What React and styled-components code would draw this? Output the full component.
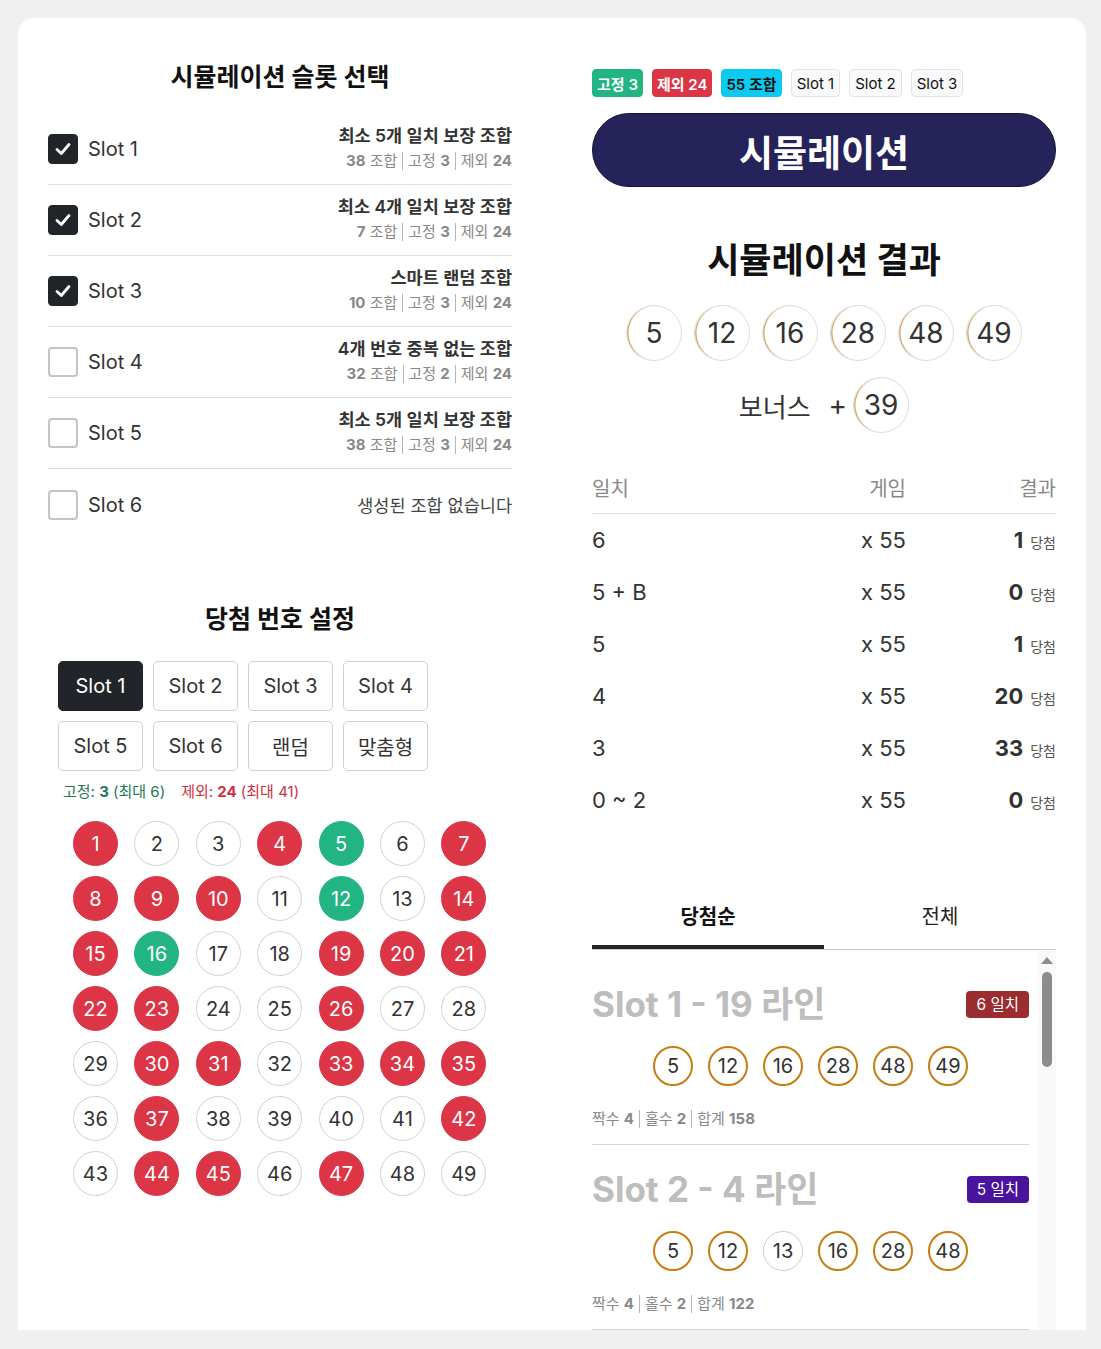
import React, { useState } from 'react';
import styled, { createGlobalStyle } from 'styled-components';

const GlobalStyle = createGlobalStyle`
  * { box-sizing: border-box; }
  body {
    margin: 0;
    padding: 18px 15px 0 18px;
    background: #f0f0f0;
    font-family: Inter, "Noto Sans CJK KR", sans-serif;
    color: #333;
  }
`;

const slots = [
  { name: 'Slot 1', checked: true, title: '최소 5개 일치 보장 조합', combos: 38, fixed: 3, excl: 24 },
  { name: 'Slot 2', checked: true, title: '최소 4개 일치 보장 조합', combos: 7, fixed: 3, excl: 24 },
  { name: 'Slot 3', checked: true, title: '스마트 랜덤 조합', combos: 10, fixed: 3, excl: 24 },
  { name: 'Slot 4', checked: false, title: '4개 번호 중복 없는 조합', combos: 32, fixed: 2, excl: 24 },
  { name: 'Slot 5', checked: false, title: '최소 5개 일치 보장 조합', combos: 38, fixed: 3, excl: 24 },
  { name: 'Slot 6', checked: false, empty: true },
];

const pickButtons = ['Slot 1', 'Slot 2', 'Slot 3', 'Slot 4', 'Slot 5', 'Slot 6', '랜덤', '맞춤형'];

const excluded = [1, 4, 7, 8, 9, 10, 14, 15, 19, 20, 21, 22, 23, 26, 30, 31, 33, 34, 35, 37, 42, 44, 45, 47];
const fixedNums = [5, 12, 16];

const winning = [5, 12, 16, 28, 48, 49];

const resultRows = [
  { match: '6', games: 55, wins: 1 },
  { match: '5 + B', games: 55, wins: 0 },
  { match: '5', games: 55, wins: 1 },
  { match: '4', games: 55, wins: 20 },
  { match: '3', games: 55, wins: 33 },
  { match: '0 ~ 2', games: 55, wins: 0 },
];

const lines = [
  { title: 'Slot 1 - 19 라인', match: 6, nums: [5, 12, 16, 28, 48, 49], even: 4, odd: 2, sum: 158 },
  { title: 'Slot 2 - 4 라인', match: 5, nums: [5, 12, 13, 16, 28, 48], even: 4, odd: 2, sum: 122 },
  { title: 'Slot 3 - 2 라인', match: 5, nums: [5, 12, 16, 28, 41, 49], even: 3, odd: 3, sum: 151 },
  { title: 'Slot 1 - 7 라인', match: 4, nums: [2, 5, 12, 16, 28, 33], even: 4, odd: 2, sum: 96 },
];

const matchColor = { 6: '#9b2c2f', 5: '#4a139e', 4: '#1f6fb2' };

export default function App() {
  const [activePick, setActivePick] = useState('Slot 1');
  const [tab, setTab] = useState('win');

  return (
    <>
      <GlobalStyle />
      <Card>
        <Column>
          <SectionTitle>시뮬레이션 슬롯 선택</SectionTitle>
          <SlotList>
            {slots.map((s) => (
              <SlotRow key={s.name}>
                <SlotLabel>
                  <CheckBox checked={s.checked}>
                    {s.checked && (
                      <svg width="20" height="20" viewBox="0 0 20 20">
                        <polyline points="4,10.5 8.3,14.5 16,5.5" fill="none" stroke="#fff" strokeWidth="2.8" strokeLinecap="round" strokeLinejoin="round" />
                      </svg>
                    )}
                  </CheckBox>
                  {s.name}
                </SlotLabel>
                {s.empty ? (
                  <EmptyText>생성된 조합 없습니다</EmptyText>
                ) : (
                  <SlotInfo>
                    <SlotInfoTitle>{s.title}</SlotInfoTitle>
                    <Stats>
                      <b>{s.combos}</b> 조합<Sep />고정 <b>{s.fixed}</b><Sep />제외 <b>{s.excl}</b>
                    </Stats>
                  </SlotInfo>
                )}
              </SlotRow>
            ))}
          </SlotList>

          <SectionTitle second>당첨 번호 설정</SectionTitle>
          <PickGrid>
            {pickButtons.map((b) => (
              <PickButton key={b} active={activePick === b} onClick={() => setActivePick(b)}>
                {b}
              </PickButton>
            ))}
          </PickGrid>
          <PickInfo>
            <Fixed>고정: <b>3</b> (최대 6)</Fixed>
            <Excluded>제외: <b>24</b> (최대 41)</Excluded>
          </PickInfo>
          <NumberGrid>
            {Array.from({ length: 49 }, (_, i) => i + 1).map((n) => (
              <NumberCell
                key={n}
                kind={fixedNums.includes(n) ? 'fixed' : excluded.includes(n) ? 'excl' : 'none'}
              >
                {n}
              </NumberCell>
            ))}
          </NumberGrid>
        </Column>

        <Column>
          <BadgeRow>
            <Badge variant="green">고정 3</Badge>
            <Badge variant="red">제외 24</Badge>
            <Badge variant="cyan">55 조합</Badge>
            <Badge variant="light">Slot 1</Badge>
            <Badge variant="light">Slot 2</Badge>
            <Badge variant="light">Slot 3</Badge>
          </BadgeRow>
          <SimButton>시뮬레이션</SimButton>

          <ResultTitle>시뮬레이션 결과</ResultTitle>
          <BallRow>
            {winning.map((n) => (
              <Ball key={n}>{n}</Ball>
            ))}
          </BallRow>
          <BonusRow>
            <BonusLabel>보너스</BonusLabel>
            <Plus>+</Plus>
            <Ball>39</Ball>
          </BonusRow>

          <ResultTable>
            <HeadCell>일치</HeadCell>
            <HeadCell align="right">게임</HeadCell>
            <HeadCell align="right">결과</HeadCell>
            {resultRows.map((r) => (
              <React.Fragment key={r.match}>
                <Cell>{r.match}</Cell>
                <Cell align="right">x {r.games}</Cell>
                <Cell align="right">
                  <b>{r.wins}</b>
                  <WinUnit>당첨</WinUnit>
                </Cell>
              </React.Fragment>
            ))}
          </ResultTable>

          <Tabs>
            <Tab active={tab === 'win'} onClick={() => setTab('win')}>당첨순</Tab>
            <Tab active={tab === 'all'} onClick={() => setTab('all')}>전체</Tab>
          </Tabs>
          <ListWrap>
            <LineList>
              {lines.map((l) => (
                <LineItem key={l.title}>
                  <LineHead>
                    <LineTitle>{l.title}</LineTitle>
                    <MatchBadge color={matchColor[l.match]}>{l.match} 일치</MatchBadge>
                  </LineHead>
                  <LineBalls>
                    {l.nums.map((n) => (
                      <SmallBall key={n} hit={winning.includes(n)}>{n}</SmallBall>
                    ))}
                  </LineBalls>
                  <Stats left>
                    짝수 <b>{l.even}</b><Sep />홀수 <b>{l.odd}</b><Sep />합계 <b>{l.sum}</b>
                  </Stats>
                </LineItem>
              ))}
            </LineList>
            <ScrollTrack>
              <ScrollArrow />
              <ScrollThumb />
            </ScrollTrack>
          </ListWrap>
        </Column>
      </Card>
    </>
  );
}

const Card = styled.div`
  width: 1068px;
  height: 1312px;
  background: #fff;
  border-radius: 16px 16px 0 0;
  padding: 30px;
  display: grid;
  grid-template-columns: 464px 464px;
  column-gap: 80px;
  overflow: hidden;
`;

const Column = styled.div`
  display: flex;
  flex-direction: column;
  min-width: 0;
`;

const SectionTitle = styled.h2`
  margin: ${({ second }) => (second ? '62px 0 0' : '12px 0 0')};
  font-size: 25px;
  line-height: 34px;
  font-weight: 700;
  color: #111;
  text-align: center;
`;

const SlotList = styled.div`
  margin-top: 20px;
`;

const SlotRow = styled.div`
  height: 71px;
  display: flex;
  align-items: center;
  justify-content: space-between;
  border-bottom: 1px solid #dedede;
  &:last-child { border-bottom: none; }
`;

const SlotLabel = styled.div`
  display: flex;
  align-items: center;
  gap: 10px;
  font-size: 20px;
  color: #333;
`;

const CheckBox = styled.span`
  width: 30px;
  height: 30px;
  border-radius: 4px;
  display: flex;
  align-items: center;
  justify-content: center;
  background: ${({ checked }) => (checked ? '#212529' : '#fff')};
  border: ${({ checked }) => (checked ? '1px solid #212529' : '2px solid #c4c4c4')};
`;

const SlotInfo = styled.div`
  text-align: right;
  margin-top: -4px;
`;

const SlotInfoTitle = styled.div`
  font-size: 17.5px;
  line-height: 23px;
  font-weight: 600;
  color: #333;
`;

const Stats = styled.div`
  margin-top: ${({ left }) => (left ? '23px' : '4px')};
  font-size: 15px;
  line-height: 20px;
  color: #8a8a8a;
  text-align: ${({ left }) => (left ? 'left' : 'right')};
  b { font-weight: 700; color: #888; }
`;

const Sep = styled.span`
  display: inline-block;
  width: 1px;
  height: 18px;
  background: #b5b5b5;
  margin: 0 5px;
  vertical-align: -4px;
`;

const EmptyText = styled.div`
  font-size: 17.5px;
  color: #444;
`;

const PickGrid = styled.div`
  margin: 25px 0 0 10px;
  display: grid;
  grid-template-columns: repeat(4, 85px);
  gap: 10px;
`;

const PickButton = styled.button`
  height: 50px;
  border-radius: 5px;
  border: 1px solid ${({ active }) => (active ? '#212529' : '#d0d0d0')};
  background: ${({ active }) => (active ? '#212529' : '#fff')};
  color: ${({ active }) => (active ? '#fff' : '#333')};
  font-family: inherit;
  font-size: 20px;
  cursor: pointer;
`;

const PickInfo = styled.div`
  margin: 11px 0 0 15px;
  display: flex;
  gap: 16px;
  font-size: 15px;
  line-height: 20px;
  b { font-weight: 700; }
`;

const Fixed = styled.span`
  color: #1d7a55;
`;

const Excluded = styled.span`
  color: #d0303f;
`;

const NumberGrid = styled.div`
  margin: 19px 0 0 25px;
  display: grid;
  grid-template-columns: repeat(7, 45px);
  column-gap: 16.4px;
  row-gap: 10px;
`;

const cellColors = {
  fixed: { bg: '#22b483', fg: '#fff', border: '#22b483' },
  excl: { bg: '#dc3545', fg: '#fff', border: '#dc3545' },
  none: { bg: '#fff', fg: '#333', border: '#d2d2d2' },
};

const NumberCell = styled.div`
  width: 45px;
  height: 45px;
  border-radius: 50%;
  display: flex;
  align-items: center;
  justify-content: center;
  font-size: 20px;
  background: ${({ kind }) => cellColors[kind].bg};
  color: ${({ kind }) => cellColors[kind].fg};
  border: 1px solid ${({ kind }) => cellColors[kind].border};
`;

const BadgeRow = styled.div`
  margin-top: 21px;
  display: flex;
  gap: 9px;
`;

const badgeColors = {
  green: { bg: '#22b483', fg: '#fff', border: '#22b483' },
  red: { bg: '#dc3545', fg: '#fff', border: '#dc3545' },
  cyan: { bg: '#0dcaf0', fg: '#111', border: '#0dcaf0' },
  light: { bg: '#f8f9fa', fg: '#111', border: '#e3e3e3' },
};

const Badge = styled.span`
  height: 28px;
  padding: ${({ variant }) => (variant === 'light' ? '0 5px' : '0 4px')};
  border-radius: 4px;
  display: flex;
  align-items: center;
  font-size: 15px;
  font-weight: ${({ variant }) => (variant === 'light' ? 400 : 600)};
  background: ${({ variant }) => badgeColors[variant].bg};
  color: ${({ variant }) => badgeColors[variant].fg};
  border: 1px solid ${({ variant }) => badgeColors[variant].border};
`;

const SimButton = styled.button`
  margin-top: 16px;
  height: 74px;
  padding-top: 3px;
  border-radius: 37px;
  border: 1px solid #15123d;
  background: #26225a;
  color: #fff;
  font-family: inherit;
  font-size: 37px;
  font-weight: 700;
  cursor: pointer;
`;

const ResultTitle = styled.h2`
  margin: 49px 0 0;
  font-size: 35px;
  line-height: 48px;
  font-weight: 700;
  color: #111;
  text-align: center;
`;

const BallRow = styled.div`
  margin-top: 21px;
  display: flex;
  justify-content: center;
  gap: 12px;
`;

const Ball = styled.div`
  width: 56px;
  height: 56px;
  border-radius: 50%;
  display: flex;
  align-items: center;
  justify-content: center;
  font-size: 28px;
  color: #333;
  background: #fff;
  border: 1px solid #dcdcdc;
  box-shadow: inset 2px 0 0 -0.5px #d9ab6a;
`;

const BonusRow = styled.div`
  margin-top: 16px;
  display: flex;
  align-items: center;
  justify-content: center;
`;

const BonusLabel = styled.span`
  font-size: 26px;
  color: #333;
  margin-right: 18px;
`;

const Plus = styled.span`
  font-size: 28px;
  color: #333;
  margin-right: 6px;
`;

const ResultTable = styled.div`
  margin-top: 42px;
  display: grid;
  grid-template-columns: 1fr 150px 150px;
`;

const HeadCell = styled.div`
  font-size: 20px;
  line-height: 28px;
  color: #888;
  text-align: ${({ align }) => align || 'left'};
  padding-bottom: 10px;
  border-bottom: 1px solid #dcdcdc;
`;

const Cell = styled.div`
  height: 52px;
  display: flex;
  align-items: center;
  justify-content: ${({ align }) => (align === 'right' ? 'flex-end' : 'flex-start')};
  font-size: 22px;
  color: #333;
  b { font-weight: 700; }
`;

const WinUnit = styled.span`
  font-size: 14px;
  color: #555;
  margin-left: 7px;
  margin-top: 4px;
`;

const Tabs = styled.div`
  margin-top: 60px;
  display: flex;
  border-bottom: 1px solid #c8c8c8;
`;

const Tab = styled.button`
  flex: 1;
  height: 63px;
  padding: 0;
  background: none;
  border: none;
  border-bottom: 4px solid ${({ active }) => (active ? '#212529' : 'transparent')};
  font-family: inherit;
  font-size: 20px;
  font-weight: ${({ active }) => (active ? 700 : 400)};
  color: ${({ active }) => (active ? '#111' : '#222')};
  cursor: pointer;
`;

const ListWrap = styled.div`
  height: 420px;
  display: flex;
`;

const LineList = styled.div`
  flex: 1;
  overflow: hidden;
  padding: 10px 9px 0 0;
`;

const ScrollTrack = styled.div`
  width: 18px;
  background: #f9f9f9;
  display: flex;
  flex-direction: column;
  align-items: center;
  padding-top: 7px;
`;

const ScrollArrow = styled.div`
  width: 0;
  height: 0;
  border-left: 6px solid transparent;
  border-right: 6px solid transparent;
  border-bottom: 7px solid #8c8c8c;
`;

const ScrollThumb = styled.div`
  margin-top: 8px;
  width: 10px;
  height: 95px;
  border-radius: 5px;
  background: #8c8c8c;
`;

const LineItem = styled.div`
  padding: 20px 0 15px;
  border-bottom: 1px solid #d6d6d6;
`;

const LineHead = styled.div`
  display: flex;
  align-items: center;
  justify-content: space-between;
`;

const LineTitle = styled.div`
  font-size: 35px;
  line-height: 48px;
  font-weight: 700;
  color: #bdbdbd;
`;

const MatchBadge = styled.span`
  padding: 4px 10px;
  border-radius: 4px;
  background: ${({ color }) => color};
  color: #fff;
  font-size: 15.5px;
  line-height: 19px;
`;

const LineBalls = styled.div`
  margin-top: 18px;
  display: flex;
  justify-content: center;
  gap: 15px;
`;

const SmallBall = styled.div`
  width: 40px;
  height: 40px;
  border-radius: 50%;
  display: flex;
  align-items: center;
  justify-content: center;
  font-size: 20px;
  color: #333;
  border: ${({ hit }) => (hit ? '2px solid #c67d12' : '1px solid #cfcfcf')};
`;
